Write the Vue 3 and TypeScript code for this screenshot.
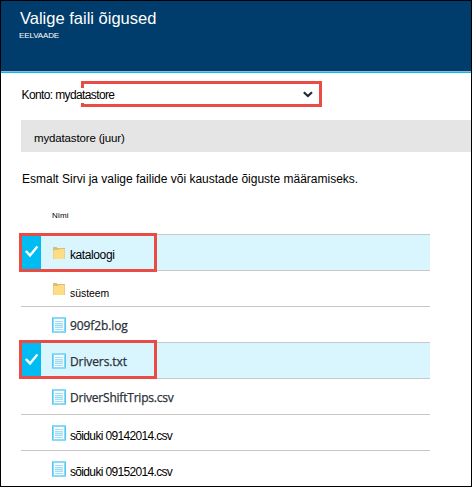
<script setup lang="ts">
interface Entry {
  name: string
  kind: 'folder' | 'file'
  checked: boolean
  style: string
}

const entries: Entry[] = [
  { name: 'kataloogi', kind: 'folder', checked: true, style: 'n-cat' },
  { name: 'süsteem', kind: 'folder', checked: false, style: 'n-sys' },
  { name: '909f2b.log', kind: 'file', checked: false, style: 'n-ui' },
  { name: 'Drivers.txt', kind: 'file', checked: true, style: 'n-ui' },
  { name: 'DriverShiftTrips.csv', kind: 'file', checked: false, style: 'n-ui n-trips' },
  { name: 'sõiduki 09142014.csv', kind: 'file', checked: false, style: 'n-csv' },
  { name: 'sõiduki 09152014.csv', kind: 'file', checked: false, style: 'n-csv' },
]
</script>

<template>
  <main class="blade">
    <header class="head">
      <h1>Valige faili õigused</h1>
      <p>EELVAADE</p>
    </header>

    <div class="account">
      <span class="label"><span>Konto: mydatastore</span></span>
      <div class="select">
        <svg width="10" height="7" viewBox="0 0 10 7">
          <path d="M0.8 1.2 L4.9 5 L9 1.2" fill="none" stroke="#222a35" stroke-width="2.2" />
        </svg>
      </div>
    </div>

    <div class="crumb"><span>mydatastore (juur)</span></div>
    <p class="hint"><span>Esmalt Sirvi ja valige failide või kaustade õiguste määramiseks.</span></p>
    <div class="column"><span>Nimi</span></div>

    <ul class="list">
      <li v-for="e in entries" :key="e.name" class="row" :class="[e.kind, { checked: e.checked }]">
        <div class="tick">
          <svg v-if="e.checked" width="20" height="33" viewBox="0 0 20 33">
            <path d="M4.8 16 L9 20.4 L16.4 11.4" fill="none" stroke="#fff" stroke-width="2.4" />
          </svg>
        </div>
        <svg v-if="e.kind === 'folder'" class="icon" width="14" height="16" viewBox="0 0 14 16">
          <path d="M1 2 H5 V3 H13 V14 H1 Z" fill="#d9bd78" />
          <path d="M2 5 H6 L7 4 H12 V14 H2 Z" fill="#fcdc84" />
          <path d="M1 5 H2 V14 H1 Z M12 4 H13 V14 H12 Z" fill="#f0cf7c" />
        </svg>
        <svg v-else class="icon" width="14" height="16" viewBox="0 0 14 16">
          <rect x="1" y="1" width="12" height="14" fill="#fff" stroke="#86dafa" stroke-width="2" />
          <path d="M0.5 1 V15 M13.5 1 V15" stroke="#5cc6ee" />
          <path d="M3 7 H11 V10 H3 Z" fill="#cdeffc" />
          <path d="M3 4.5 H11 M3 6.5 H11 M3 8.5 H11 M3 10.5 H11 M3 12.5 H11" stroke="#9fe0f8" />
        </svg>
        <span class="name" :class="e.style">{{ e.name }}</span>
        <div v-if="e.checked" class="mark"></div>
      </li>
    </ul>
  </main>
</template>

<style>
body {
  margin: 0;
}
</style>

<style scoped>
.blade {
  box-sizing: border-box;
  width: 472px;
  height: 487px;
  overflow: hidden;
  border: 1px solid #000;
  background: #fff;
  color: #000;
  font-family: "Liberation Sans", Arial, sans-serif;
  white-space: nowrap;
}
.head {
  box-sizing: border-box;
  height: 72px;
  padding: 7px 0 0 19px;
  background: #003c6c;
  border-bottom: 1px solid #00bcf2;
  box-shadow: inset 0 -1px #8fb9cf;
  color: #fff;
}
h1 {
  margin: 0;
  font-size: 16.5px;
  font-weight: 400;
  line-height: 20px;
}
.head p {
  margin: 2px 0 0 -1px;
  font-size: 8px;
  letter-spacing: -0.13px;
  line-height: 12px;
}
.account {
  display: flex;
  height: 26px;
  margin-top: 8px;
  padding-left: 20px;
}
.label {
  position: relative;
  z-index: 1;
  width: 60px;
  height: 14px;
  margin-top: 7px;
  font-size: 12px;
  letter-spacing: -0.62px;
  line-height: 15px;
}
.label span {
  display: inline-block;
  padding-left: 0.5px;
  background: #fff;
}
.select {
  box-sizing: border-box;
  display: flex;
  justify-content: flex-end;
  align-items: center;
  width: 241px;
  height: 26px;
  padding-right: 6px;
  border: 3px solid #e84c45;
}
.crumb {
  height: 32px;
  margin: 13px 0 0 20px;
  padding-left: 13px;
  background: #e5e5e5;
  font-size: 11.5px;
  letter-spacing: -0.15px;
  line-height: 36px;
}
.hint {
  margin: 19px 0 0 21px;
  font-size: 12px;
  line-height: 16px;
}
.column {
  margin: 24px 0 0 51px;
  font-size: 8px;
  letter-spacing: 0.2px;
  line-height: 10px;
}
.list {
  width: 409px;
  margin: 13px 0 0 20px;
  padding: 0;
  list-style: none;
}
.row {
  position: relative;
  box-sizing: border-box;
  display: flex;
  height: 36px;
  border-top: 1px solid #c8c8c8;
}
.checked {
  background: #d9f5fe;
}
.tick {
  width: 20px;
  height: 35px;
}
.checked .tick {
  background: #00bcf2;
}
.icon {
  flex: none;
  margin: 10px 4px 0 11px;
}
.name {
  font-size: 12px;
  line-height: 14px;
  margin-top: 13px;
}
.n-cat {
  letter-spacing: -0.4px;
}
.n-sys {
  font-size: 10.4px;
  margin-top: 16px;
}
.n-csv {
  margin-top: 14px;
  letter-spacing: -0.66px;
}
.n-ui {
  font-family: "Open Sans", "Noto Sans", sans-serif;
  color: #2b3138;
  margin-top: 12px;
  letter-spacing: -0.1px;
  -webkit-text-stroke: 0.25px #2b3138;
}
.n-trips {
  letter-spacing: -0.21px;
}
.mark {
  position: absolute;
  z-index: 1;
  box-sizing: border-box;
  left: -2px;
  top: -2px;
  width: 138px;
  height: 39px;
  border: 3px solid #e84c45;
}
.file .mark {
  top: -3px;
}
</style>
